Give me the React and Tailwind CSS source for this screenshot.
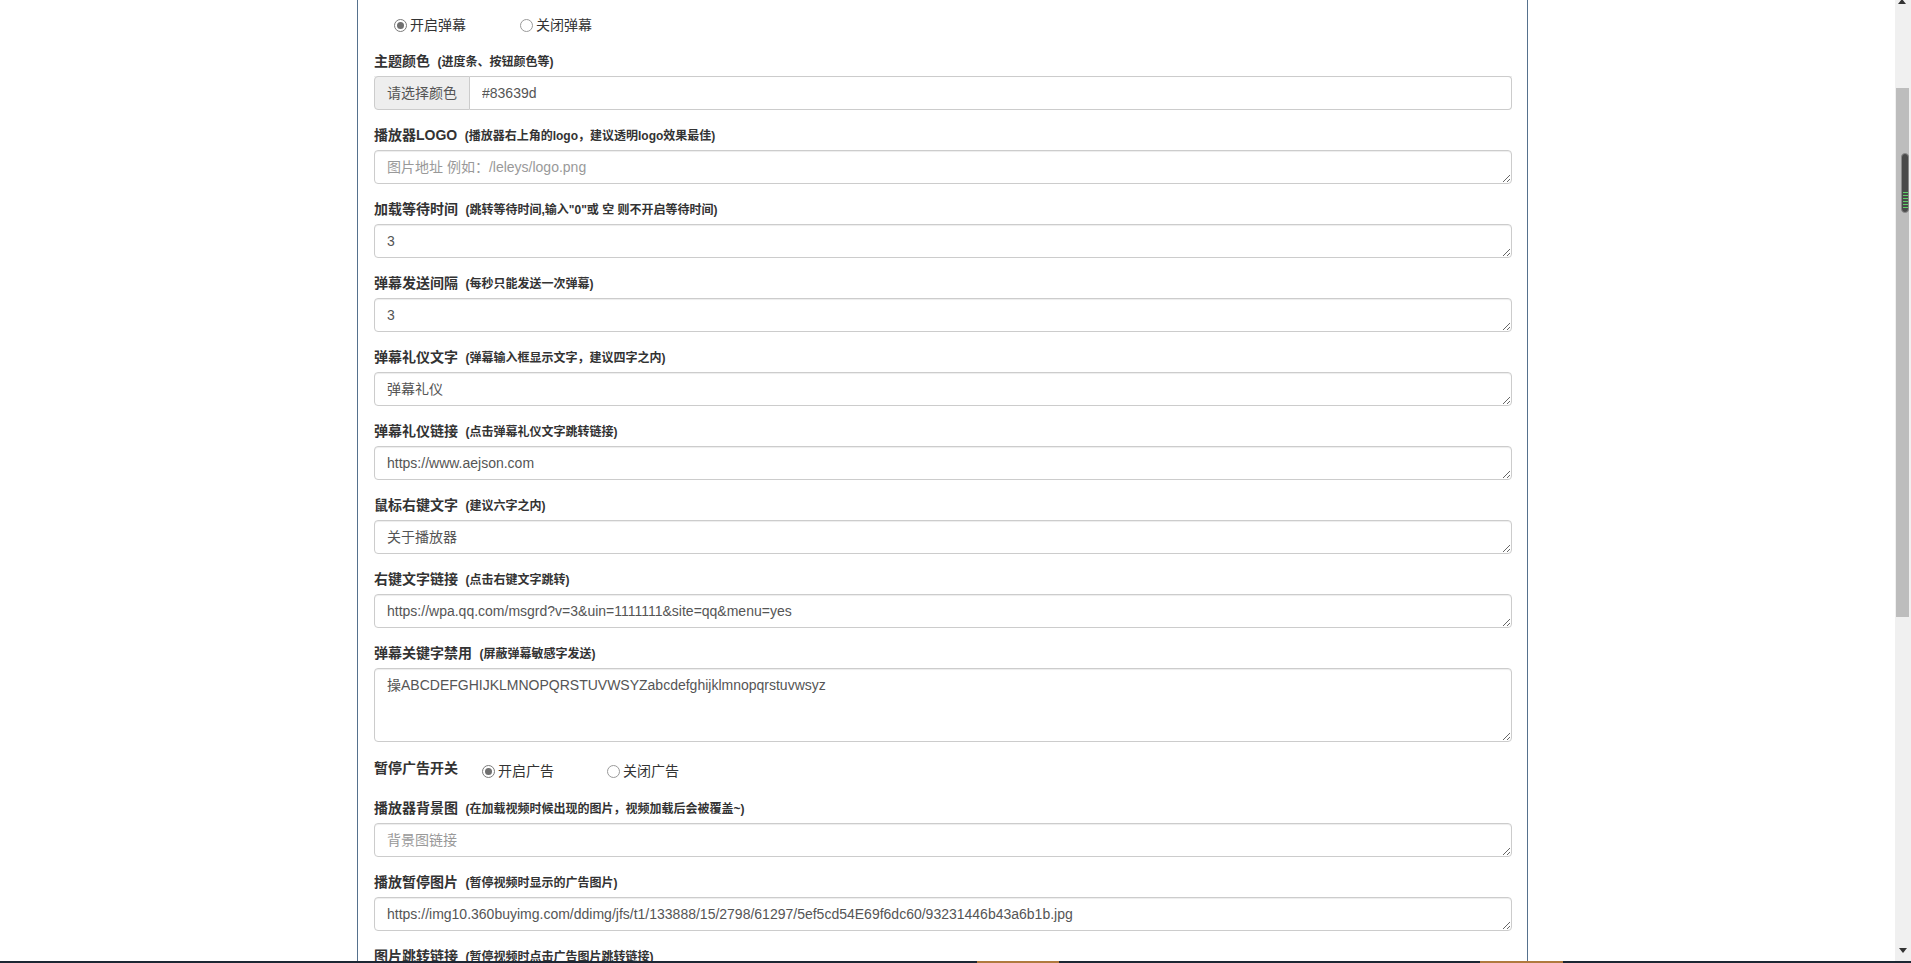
import React from "react";

const fields = [
  { label: "播放器LOGO", hint: "(播放器右上角的logo，建议透明logo效果最佳)", placeholder: "图片地址 例如：/leleys/logo.png" },
  { label: "加载等待时间", hint: '(跳转等待时间,输入"0"或 空 则不开启等待时间)', value: "3" },
  { label: "弹幕发送间隔", hint: "(每秒只能发送一次弹幕)", value: "3" },
  { label: "弹幕礼仪文字", hint: "(弹幕输入框显示文字，建议四字之内)", value: "弹幕礼仪" },
  { label: "弹幕礼仪链接", hint: "(点击弹幕礼仪文字跳转链接)", value: "https://www.aejson.com" },
  { label: "鼠标右键文字", hint: "(建议六字之内)", value: "关于播放器" },
  { label: "右键文字链接", hint: "(点击右键文字跳转)", value: "https://wpa.qq.com/msgrd?v=3&uin=1111111&site=qq&menu=yes" },
];

const adFields = [
  { label: "播放器背景图", hint: "(在加载视频时候出现的图片，视频加载后会被覆盖~)", placeholder: "背景图链接" },
  {
    label: "播放暂停图片",
    hint: "(暂停视频时显示的广告图片)",
    value: "https://img10.360buyimg.com/ddimg/jfs/t1/133888/15/2798/61297/5ef5cd54E69f6dc60/93231446b43a6b1b.jpg",
  },
  { label: "图片跳转链接", hint: "(暂停视频时点击广告图片跳转链接)", value: "" },
];

const inputCls =
  "block w-full border border-[#ccc] rounded-[4px] px-[12px] py-[6px] text-[14px] leading-[20px] text-[#555] bg-white placeholder:text-[#999] shadow-[inset_0_1px_1px_rgba(0,0,0,0.075)] resize-y outline-none";

const Label = ({ label, hint }) => (
  <div className="h-[20px] leading-[20px] mb-[5px] font-bold text-[#333] whitespace-nowrap">
    <span className="text-[14px]">{label}</span>{" "}
    <span className="ml-[3px] text-[12px]">{hint}</span>
  </div>
);

const Radio = ({ checked, label, className }) => (
  <label className={"flex items-center h-[20px] text-[14px] text-[#333] " + (className || "")}>
    <span
      className={
        "w-[13px] h-[13px] rounded-full border bg-white flex items-center justify-center " +
        (checked ? "border-[#7a7a7a]" : "border-[#9a9a9a]")
      }
    >
      {checked && <span className="w-[7px] h-[7px] rounded-full bg-[#707070]" />}
    </span>
    <span className="ml-[3px]">{label}</span>
  </label>
);

const Field = ({ label, hint, value, placeholder, rows }) => (
  <div className="mb-[15px]">
    <Label label={label} hint={hint} />
    <textarea
      rows={rows || 1}
      className={inputCls + (rows ? " h-[74px]" : " h-[34px]")}
      defaultValue={value}
      placeholder={placeholder}
    />
  </div>
);

const Scrollbar = () => (
  <div className="w-[16px] bg-[#f0f0f0] flex flex-col">
    <div className="mt-[-1px] ml-[3px] w-0 h-0 border-x-[4px] border-x-transparent border-b-[5px] border-b-[#333]" />
    <div className="mt-[84px] ml-[1px] w-[13px] h-[529px] bg-[#bdbdbd] flex flex-col">
      <div className="mt-[65px] ml-[5px] w-[8px] h-[60px] rounded-full bg-[#4a4a4a] border border-[#8a8a8a] flex flex-col items-center pt-[38px] gap-[2px]">
        <div className="w-[5px] h-[1px] bg-[#5fd068]" />
        <div className="w-[5px] h-[1px] bg-[#5fd068]" />
        <div className="w-[5px] h-[1px] bg-[#5fd068]" />
        <div className="w-[5px] h-[1px] bg-[#5fd068]" />
        <div className="w-[5px] h-[1px] bg-[#5fd068]" />
        <div className="w-[5px] h-[1px] bg-[#5fd068]" />
      </div>
    </div>
    <div className="flex-1" />
    <div className="mb-[8px] ml-[4px] w-0 h-0 border-x-[4px] border-x-transparent border-t-[5px] border-t-[#333]" />
  </div>
);

const App = () => {
  return (
    <div className="w-[1911px] h-[963px] overflow-hidden flex flex-col bg-white font-[family-name:'Liberation_Sans','Noto_Sans_CJK_SC',sans-serif]">
      <div className="flex flex-1 min-h-0">
        <main className="flex-1 min-w-0 overflow-hidden">
          <div className="ml-[357px] w-[1171px] h-full border-x border-[#56718d] pl-[16px] pr-[15px] pt-[15px]">
            {/* 弹幕开关 */}
            <div className="flex items-center h-[20px] mb-[16px]">
              <Radio checked label="开启弹幕" className="ml-[20px]" />
              <Radio label="关闭弹幕" className="ml-[54px]" />
            </div>

            {/* 主题颜色 */}
            <div className="mb-[15px]">
              <Label label="主题颜色" hint="(进度条、按钮颜色等)" />
              <div className="flex h-[34px] text-[14px] shadow-[inset_0_1px_1px_rgba(0,0,0,0.075)]">
                <span className="flex items-center px-[12px] bg-[#eee] border border-[#ccc] rounded-l-[4px] text-[#555]">
                  请选择颜色
                </span>
                <input
                  className="flex-1 border border-l-0 border-[#ccc] rounded-r-[4px] px-[12px] text-[#555] outline-none"
                  defaultValue="#83639d"
                />
              </div>
            </div>

            {fields.map((f) => (
              <Field key={f.label} {...f} />
            ))}

            <Field
              label="弹幕关键字禁用"
              hint="(屏蔽弹幕敏感字发送)"
              rows={3}
              value="操ABCDEFGHIJKLMNOPQRSTUVWSYZabcdefghijklmnopqrstuvwsyz"
            />

            {/* 暂停广告开关 */}
            <div className="flex items-start h-[26px] mb-[15px]">
              <div className="mt-[1px] h-[20px] leading-[20px] text-[14px] font-bold text-[#333]">暂停广告开关</div>
              <div className="mt-[4px] flex">
                <Radio checked label="开启广告" className="ml-[24px]" />
                <Radio label="关闭广告" className="ml-[53px]" />
              </div>
            </div>

            {adFields.map((f) => (
              <Field key={f.label} {...f} />
            ))}
          </div>
        </main>
        <Scrollbar />
      </div>
      <div className="h-[2px] bg-[#1c2733] flex">
        <div className="ml-[977px] w-[82px] bg-[#b07a3e]" />
        <div className="ml-[421px] w-[83px] bg-[#b07a3e]" />
      </div>
    </div>
  );
};

export default App;
